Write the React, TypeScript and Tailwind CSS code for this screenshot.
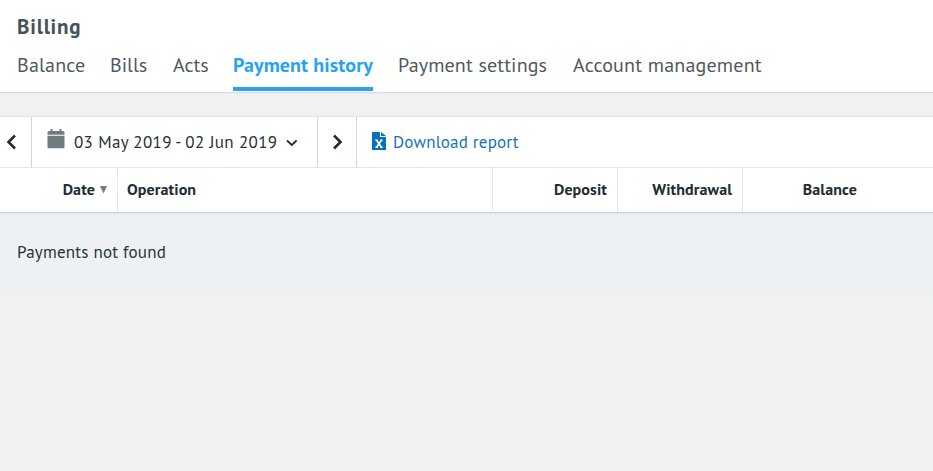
const tabs = [
  { label: "Balance", box: "w-[68px] tracking-[0.2px]" },
  { label: "Bills", box: "w-[37px] tracking-[0px]" },
  { label: "Acts", box: "mr-px w-[35px] pl-px tracking-[0px]" },
  { label: "Payment history", box: "w-[140px] tracking-[0.1px]", active: true },
  { label: "Payment settings", box: "w-[150px] tracking-[0.15px]" },
  { label: "Account management", box: "w-[190px] tracking-[0.2px]" },
];

function Header() {
  return (
    <header className="h-[92px] bg-white px-[17px] shadow-[0_1px_1px_#dcdddd]">
      <h1 className="h-[50px] pt-[13px] text-[21px] leading-7 font-bold text-[#46535b]">
        <span className="tracking-[0.8px]">Billing</span>
      </h1>
      <nav className="flex gap-[25px] text-[20px] leading-[30px]">
        {tabs.map((t) => (
          <a
            key={t.label}
            className={`h-[41px] whitespace-nowrap ${t.box} ${
              t.active ? "border-b-4 border-[#29a3f0] font-bold text-[#29a3f0]" : "text-[#4f5960]"
            }`}
          >
            <span>{t.label}</span>
          </a>
        ))}
      </nav>
    </header>
  );
}

function Toolbar() {
  return (
    <div className="flex h-[50px] bg-white text-[17px] shadow-[0_0_1px_1px_#e3e5e6]">
      <button className="w-8 border-r border-[#d3d6d7] pl-[6px]">
        <svg width="11" height="16" viewBox="0 0 11 16" fill="none" stroke="#202d34" strokeWidth="2.6">
          <path d="M9 1.5 2.5 8 9 14.5" />
        </svg>
      </button>
      <button className="flex w-[286px] items-center border-r border-[#d3d6d7] pl-[15px] text-[#263238]">
        <svg className="-mt-[6px] mr-[9px]" width="18" height="20" viewBox="0 0 18 20" fill="#717c81">
          <path d="M3.5 0h2v2h7V0h2v2H16q1.500 0 1.500 1.500V5.800H0.500V3.500Q0.500 2 2 2h1.500zM0.500 6.700h17V18q0 1.200-1.200 1.200H1.700Q0.500 19.200 0.500 18z" />
        </svg>
        <span className="mt-0.5 tracking-[0.36px] whitespace-nowrap">03 May 2019 - 02 Jun 2019</span>
        <svg className="mt-px ml-[9px]" width="12" height="8" viewBox="0 0 12 8" fill="none" stroke="#202d34" strokeWidth="1.8">
          <path d="m1 1.5 4.8 4.5 4.8-4.5" />
        </svg>
      </button>
      <button className="w-[39px] border-r border-[#d3d6d7] pl-[14px]">
        <svg width="11" height="16" viewBox="0 0 11 16" fill="none" stroke="#202d34" strokeWidth="2.6">
          <path d="m2 1.500 6.500 6.500-6.500 6.500" />
        </svg>
      </button>
      <a className="flex items-center pl-[15px] text-[#1375b5]">
        <svg className="-mt-[3px] mr-[7px]" width="14" height="18" viewBox="0 0 14 18" fill="#0872b5">
          <path d="M0 0h8v5h6v13H0zM9 0l5 4H9z" />
          <path d="M3.400 8.300h2.400M8.200 8.300h2.400M3.400 15.200h2.400M8.200 15.200h2.400M4.600 8.300l4.800 6.900M9.400 8.300l-4.800 6.900" stroke="#fff" strokeWidth="1.6" />
        </svg>
        <span className="mt-0.5 tracking-[0.2px] whitespace-nowrap">Download report</span>
      </a>
    </div>
  );
}

function TableHead() {
  return (
    <div className="flex h-11 bg-white text-[16px] leading-[43px] font-bold text-[#222d33]">
      <div className="flex w-[118px] justify-end border-r border-[#e5e7e8] pr-[10px]">
        <span className="tracking-[0.1px]">Date</span>
        <svg className="mt-[18px] ml-[5px]" width="7" height="8" viewBox="0 0 7 8" fill="#70807f">
          <path d="M0 0h7L3.5 7.5z" />
        </svg>
      </div>
      <div className="w-[375px] border-r border-[#e5e7e8] pl-[9px]"><span className="tracking-[0.1px]">Operation</span></div>
      <div className="w-[125px] border-r border-[#e5e7e8] pr-[10px] text-right"><span className="tracking-[0.1px]">Deposit</span></div>
      <div className="w-[125px] border-r border-[#e5e7e8] pr-[10px] text-right"><span className="tracking-[0.1px]">Withdrawal</span></div>
      <div className="w-[114px] text-right"><span className="tracking-[0.1px]">Balance</span></div>
    </div>
  );
}

export default function App() {
  return (
    <div className="h-[471px] w-full overflow-hidden bg-[#f0f1f3] font-['PT_Sans','Noto_Sans',sans-serif]">
      <Header />
      <main className="pt-[25px]">
        <Toolbar />
        <div className="mt-px"><TableHead /></div>
        <div className="h-[79px] border-t border-[#cfd3d4] bg-[#edf1f4] px-[17px] pt-[27px] text-[17px] leading-6 text-[#263238] shadow-[inset_0_1px_1px_#dfe3e5]">
          <span className="tracking-[0.22px]">Payments not found</span>
        </div>
      </main>
    </div>
  );
}
